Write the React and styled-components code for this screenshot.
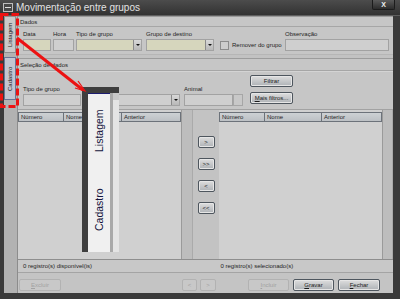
import React from 'react';
import styled, { createGlobalStyle } from 'styled-components';

const Global = createGlobalStyle`
  html, body { margin: 0; padding: 0; background: #2e2e2e; }
  body { width: 400px; height: 299px; overflow: hidden; font-family: "Liberation Sans", Arial, sans-serif; }
  * { box-sizing: border-box; }
`;

const Window = styled.div`
  position: relative;
  width: 400px;
  height: 299px;
  background: #3a3a3a;
  display: flex;
  flex-direction: column;
`;

const TitleBar = styled.div`
  height: 16px;
  display: flex;
  align-items: flex-start;
  background: linear-gradient(#4c4c4c, #323232);
  border-bottom: 1px solid #5e5e5e;
  padding-left: 3px;
`;

const SysIcon = styled.div`
  width: 10px;
  height: 9px;
  margin-top: 3px;
  border: 1px solid #bdbdbd;
  background: #484848;
  display: flex;
  align-items: center;
  justify-content: center;
  &::after { content: ''; width: 6px; height: 1px; background: #e0e0e0; }
`;

const Title = styled.div`
  margin-left: 3px;
  margin-top: 2px;
  font-size: 10px;
  line-height: 11px;
  color: #e2e2e2;
  white-space: nowrap;
`;

const CloseBtn = styled.div`
  margin-left: auto;
  margin-right: 5px;
  width: 23px;
  height: 10px;
  background: linear-gradient(#5a5a5a, #2c2c2c);
  border: 1px solid #1c1c1c;
  border-top: none;
  border-radius: 0 0 2px 2px;
  color: #f0f0f0;
  font-size: 7px;
  font-weight: bold;
  line-height: 9px;
  text-align: center;
`;

const Body = styled.div`
  display: flex;
  height: 277px;
  padding-left: 4px;
`;

const TabStrip = styled.div`
  width: 13px;
  background: #b2b2b2;
  display: flex;
  flex-direction: column;
  gap: 4px;
`;

const Tab = styled.div`
  width: 12px;
  height: ${p => p.$h}px;
  writing-mode: vertical-rl;
  transform: rotate(180deg);
  display: flex;
  align-items: center;
  justify-content: center;
  font-size: 6px;
  color: #1c1c1c;
  background: ${p => (p.$active ? '#c2c6d2' : '#c9c9c9')};
  border: 1px solid ${p => (p.$active ? '#6a7496' : '#8e8e8e')};
`;

const Content = styled.div`
  width: 376px;
  display: flex;
  flex-direction: column;
  background: #c6c6c6;
  border-left: 1px solid #8c8c8c;
`;

const SectionHeader = styled.div`
  height: ${p => p.$h}px;
  padding-left: 2px;
  font-size: 6px;
  line-height: ${p => p.$h}px;
  color: #1e1e1e;
  border-top: ${p => (p.$top ? '1px solid #9a9a9a' : 'none')};
  border-bottom: 1px solid #a6a6a6;
`;

const FieldsRow = styled.div`
  height: ${p => p.$h}px;
  display: flex;
  align-items: flex-end;
  padding: 0 4px ${p => p.$pb}px 5px;
`;

const Field = styled.div`
  display: flex;
  flex-direction: column;
  gap: 1px;
  width: ${p => p.$w}px;
  margin-left: ${p => (p.$auto ? 'auto' : `${p.$ml || 0}px`)};
`;

const Label = styled.div`
  font-size: 6px;
  line-height: 7px;
  color: #1e1e1e;
  white-space: nowrap;
`;

const Input = styled.div`
  height: 12px;
  width: 100%;
  flex: ${p => (p.$grow ? 1 : 'none')};
  display: flex;
  justify-content: flex-end;
  background: ${p => (p.$yellow ? '#d6d6bd' : '#cfcfcf')};
  border: 1px solid #a2a2a2;
`;

const Combo = styled.div`
  width: 8px;
  height: 10px;
  background: linear-gradient(#d8d8d8, #b8b8b8);
  border-left: 1px solid #8a8a8a;
  display: flex;
  align-items: center;
  justify-content: center;
  &::after {
    content: '';
    border-left: 2px solid transparent;
    border-right: 2px solid transparent;
    border-top: 2px solid #101010;
  }
`;

const InputWrap = styled.div`
  display: flex;
`;

const SideBtn = styled.div`
  width: 10px;
  height: 12px;
  flex: none;
  background: #c8c8c8;
  border: 1px solid #a6a6a6;
`;

const CheckGroup = styled.div`
  height: 12px;
  display: flex;
  align-items: center;
  gap: 3px;
  margin-left: ${p => p.$ml}px;
  font-size: 6px;
  color: #1e1e1e;
  white-space: nowrap;
`;

const Check = styled.div`
  width: 9px;
  height: 9px;
  border: 1px solid #8c8c8c;
  background: #cdcdcd;
`;

const Divider = styled.div`
  height: 5px;
  border-top: 1px solid #b6b6b6;
  border-bottom: 1px solid #9c9c9c;
  background: #c2c2c2;
`;

const FilterPanel = styled.div`
  height: 38px;
  display: flex;
  padding-left: 5px;
  border-top: 1px solid #d4d4d4;
`;

const FilterFields = styled.div`
  display: flex;
  align-items: flex-end;
  padding-bottom: 3px;
`;

const ButtonCol = styled.div`
  display: flex;
  flex-direction: column;
  gap: 5px;
  padding-top: 3px;
  margin-left: 7px;
`;

const Button = styled.div`
  width: ${p => p.$w}px;
  height: 12px;
  margin-left: ${p => p.$ml || 0}px;
  display: flex;
  align-items: center;
  justify-content: center;
  font-size: 6px;
  white-space: nowrap;
  border-radius: 2px;
  color: ${p => (p.$disabled ? '#a2a2a2' : '#1a1a1a')};
  background: ${p => (p.$disabled ? '#c8c8c8' : 'linear-gradient(#dedede, #aeb2b6)')};
  border: 1px solid ${p => (p.$disabled ? '#b2b2b2' : '#4e565e')};
  box-shadow: ${p => (p.$disabled ? 'none' : 'inset 0 0 0 1px #e6e6e6')};
  u { text-decoration: underline; }
`;

const Lists = styled.div`
  height: 150px;
  display: flex;
  border-top: 1px solid #a2a2a2;
`;

const ListPanel = styled.div`
  display: flex;
`;

const List = styled.div`
  width: 163px;
  display: flex;
  flex-direction: column;
  background: #d0d0d0;
  padding-top: 2px;
`;

const HeaderRow = styled.div`
  display: flex;
  height: 10px;
`;

const HeaderCell = styled.div`
  width: ${p => p.$w}px;
  height: 10px;
  padding-left: 2px;
  font-size: 6px;
  line-height: 8px;
  color: #1e1e1e;
  background: linear-gradient(#cdd1d4, #bcc0c4);
  border: 1px solid #6c727a;
  border-left-width: ${p => (p.$first ? 1 : 0)}px;
`;

const Scroll = styled.div`
  width: ${p => p.$w}px;
  background: #bdbdbd;
  border-left: 1px solid #9a9a9a;
  border-right: 1px solid #aaaaaa;
`;

const Middle = styled.div`
  width: 27px;
  display: flex;
  flex-direction: column;
  align-items: center;
  gap: 10px;
  padding-top: 26px;
  background: #c3c3c3;
`;

const StatusBar = styled.div`
  height: 14px;
  display: flex;
  align-items: center;
  background: #c8c8c8;
  border-top: 1px solid #8e8e8e;
  border-bottom: 1px solid #a4a4a4;
  font-size: 6px;
  color: #1e1e1e;
`;

const StatusCell = styled.div`
  width: ${p => p.$w}px;
  padding-left: ${p => p.$pl}px;
  white-space: nowrap;
`;

const ButtonBar = styled.div`
  height: 20px;
  display: flex;
  align-items: flex-start;
  padding-top: 6px;
  background: #c4c4c4;
`;

const Zoom = styled.div`
  position: absolute;
  left: 82px;
  top: 87px;
  width: 37px;
  height: 165px;
  display: flex;
  border-left: 6px solid #3e3e3e;
  border-top: 6px solid #3e3e3e;
  background: #e2e2e2;
`;

const ZoomTabs = styled.div`
  width: 22px;
  display: flex;
  flex-direction: column;
  background: #f0f0f0;
`;

const ZoomTab = styled.div`
  height: ${p => p.$h}px;
  writing-mode: vertical-rl;
  transform: rotate(180deg);
  display: flex;
  align-items: center;
  justify-content: center;
  font-size: 10.5px;
  color: #14143c;
  border-bottom: ${p => (p.$line ? '1.5px solid #1c1c70' : 'none')};
`;

const ZoomStrip = styled.div`
  width: 3px;
  background: #a9a9a9;
`;

const ZoomEdge = styled.div`
  width: 6px;
  background: #e4e4e4;
  border-top: 7px solid #c8c8c8;
`;

const Annotation = styled.svg`
  position: absolute;
  left: 0;
  top: 0;
  pointer-events: none;
`;

export default function App() {
  return (
    <>
      <Global />
      <Window>
        <TitleBar>
          <SysIcon />
          <Title>Movimentação entre grupos</Title>
          <CloseBtn>X</CloseBtn>
        </TitleBar>
        <Body>
          <TabStrip>
            <Tab $h={37}>Listagem</Tab>
            <Tab $h={43} $active>Cadastro</Tab>
          </TabStrip>
          <Content>
            <SectionHeader $h={11} $top>Dados</SectionHeader>
            <FieldsRow $h={27} $pb={3}>
              <Field $w={28}>
                <Label>Data</Label>
                <Input $yellow />
              </Field>
              <Field $w={21} $ml={2}>
                <Label>Hora</Label>
                <Input />
              </Field>
              <Field $w={66} $ml={2}>
                <Label>Tipo de grupo</Label>
                <Input $yellow><Combo /></Input>
              </Field>
              <Field $w={68} $ml={4}>
                <Label>Grupo de destino</Label>
                <Input $yellow><Combo /></Input>
              </Field>
              <CheckGroup $ml={6}>
                <Check />
                Remover do grupo
              </CheckGroup>
              <Field $w={104} $auto>
                <Label>Observação</Label>
                <Input />
              </Field>
            </FieldsRow>
            <Divider />
            <SectionHeader $h={12}>Seleção de dados</SectionHeader>
            <FilterPanel>
              <FilterFields>
                <Field $w={58}>
                  <Label>Tipo de grupo</Label>
                  <Input />
                </Field>
                <Field $w={84} $ml={15}>
                  <Label>Grupo</Label>
                  <Input><Combo /></Input>
                </Field>
                <Field $w={59} $ml={4}>
                  <Label>Animal</Label>
                  <InputWrap>
                    <Input $grow />
                    <SideBtn />
                  </InputWrap>
                </Field>
              </FilterFields>
              <ButtonCol>
                <Button $w={43}>Filtrar</Button>
                <Button $w={43}><span><u>M</u>ais filtros...</span></Button>
              </ButtonCol>
            </FilterPanel>
            <Lists>
              <ListPanel>
                <List>
                  <HeaderRow>
                    <HeaderCell $w={46} $first>Número</HeaderCell>
                    <HeaderCell $w={58}>Nome</HeaderCell>
                    <HeaderCell $w={59}>Anterior</HeaderCell>
                  </HeaderRow>
                </List>
                <Scroll $w={12} />
              </ListPanel>
              <Middle>
                <Button $w={17}>&gt;</Button>
                <Button $w={17}>&gt;&gt;</Button>
                <Button $w={17}>&lt;</Button>
                <Button $w={17}>&lt;&lt;</Button>
              </Middle>
              <ListPanel>
                <List>
                  <HeaderRow>
                    <HeaderCell $w={46} $first>Número</HeaderCell>
                    <HeaderCell $w={57}>Nome</HeaderCell>
                    <HeaderCell $w={60}>Anterior</HeaderCell>
                  </HeaderRow>
                </List>
                <Scroll $w={11} />
              </ListPanel>
            </Lists>
            <StatusBar>
              <StatusCell $w={202} $pl={5}>0 registro(s) disponível(is)</StatusCell>
              <StatusCell $w={174} $pl={1}>0 registro(s) selecionado(s)</StatusCell>
            </StatusBar>
            <ButtonBar>
              <Button $w={42} $ml={1} $disabled><u>E</u>xcluir</Button>
              <Button $w={15} $ml={121} $disabled>&lt;</Button>
              <Button $w={16} $ml={3} $disabled>&gt;</Button>
              <Button $w={41} $ml={32} $disabled><u>I</u>ncluir</Button>
              <Button $w={41} $ml={4}><span><u>G</u>ravar</span></Button>
              <Button $w={42} $ml={4}><span><u>F</u>echar</span></Button>
            </ButtonBar>
          </Content>
        </Body>
        <Zoom>
          <ZoomTabs>
            <ZoomTab $h={74} $line>Listagem</ZoomTab>
            <ZoomTab $h={85}>Cadastro</ZoomTab>
          </ZoomTabs>
          <ZoomStrip />
          <ZoomEdge />
        </Zoom>
        <Annotation width="400" height="299" viewBox="0 0 400 299">
          <rect x="1.5" y="14.5" width="16" height="92" fill="none" stroke="#ec1212" strokeWidth="3" strokeDasharray="7 3" />
          <line x1="17" y1="38" x2="83" y2="90" stroke="#ec1212" strokeWidth="3" />
          <polyline points="78,81 85,91 75,88" fill="none" stroke="#ec1212" strokeWidth="1.2" />
        </Annotation>
      </Window>
    </>
  );
}
